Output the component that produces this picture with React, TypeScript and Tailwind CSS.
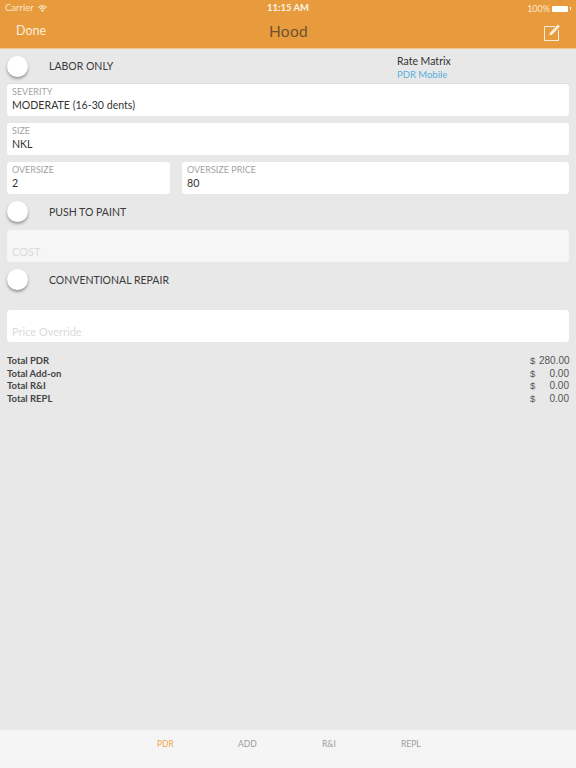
const Toggle = () => (
  <div className="w-[21px] h-[21px] rounded-full bg-white shadow-[0_2px_3px_rgba(0,0,0,0.35)] shrink-0" />
);

const Field = ({ label, value, className = "" }: { label: string; value: string; className?: string }) => (
  <div className={`h-[32px] bg-white rounded-[3px] px-[5px] pt-[2px] ${className}`}>
    <p className="text-[9px] leading-[11px] text-[#a3a3a3]">{label}</p>
    <p className="text-[10.6px] leading-[16px] text-[#333]">{value}</p>
  </div>
);

const Placeholder = ({ label, className = "" }: { label: string; className?: string }) => (
  <div className={`h-[32px] rounded-[3px] px-[5px] flex items-end pb-[3px] ${className}`}>
    <p className="text-[11px] leading-[14px] text-[#dadada]">{label}</p>
  </div>
);

const ToggleRow = ({ label, className = "" }: { label: string; className?: string }) => (
  <div className={`flex items-center ${className}`}>
    <Toggle />
    <span className="ml-[21px] mt-[2px] text-[10.5px] text-[#3a3a3a]">{label}</span>
  </div>
);

const totals = [
  ["Total PDR", "280.00"],
  ["Total Add-on", "0.00"],
  ["Total R&I", "0.00"],
  ["Total REPL", "0.00"],
];

const App = () => {
  return (
    <div className="w-[576px] h-[768px] flex flex-col bg-[#e8e8e8] font-['Lato',sans-serif] overflow-hidden">
      <header className="h-[49px] shrink-0 bg-[#e89b3c] border-b border-[#f0c48c] text-white">
        <div className="h-[17px] px-[5px] flex items-center justify-between text-[9.5px]">
          <div className="flex items-center gap-[4px] w-[100px] text-[#fbe6cc]">
            <span>Carrier</span>
            <svg width="9" height="7" viewBox="0 0 18 14" fill="currentColor">
              <path d="M9 14 6 10.6a4.4 4.4 0 0 1 6 0zM4.6 9 3 7.3a8.6 8.6 0 0 1 12 0L13.4 9a6.4 6.4 0 0 0-8.8 0zM1.7 6 0 4.3a13 13 0 0 1 18 0L16.3 6A10.6 10.6 0 0 0 1.7 6z" />
            </svg>
          </div>
          <span className="font-bold text-[#fdf3e6]">11:15 AM</span>
          <div className="flex items-center justify-end gap-[2px] w-[100px] text-[9px] text-[#fbe6cc]">
            <span>100%</span>
            <div className="w-[16px] h-[6px] bg-white rounded-[1px]" />
            <div className="w-[1px] h-[3px] bg-white" />
          </div>
        </div>
        <div className="h-[29px] pl-[16px] pr-[15px] flex items-center justify-between">
          <span className="w-[80px] text-[12.5px] text-[#fbeedd]">Done</span>
          <span className="text-[15.5px] tracking-[0.3px] text-[#6d5230]">Hood</span>
          <div className="w-[80px] flex justify-end">
            <svg width="18" height="18" viewBox="0 0 18 18" fill="none" stroke="#fbeedd" strokeWidth="1">
              <path d="M12 3.5H1.5v14h14V7" />
              <path d="M6.5 12.5 7 9.8 14.8 1.5l2 1.9L9 11.7z" fill="#fbeedd" stroke="none" />
            </svg>
          </div>
        </div>
      </header>

      <main className="flex-1 px-[7px] pt-[5px]">
        <div className="flex items-center h-[30px] border-b border-[#e0e0e0]">
          <ToggleRow label="LABOR ONLY" className="flex-1 pb-[5px]" />
          <div className="w-[172px] shrink-0 pb-[1px]">
            <p className="text-[10.5px] leading-[13px] text-[#333]">Rate Matrix</p>
            <p className="text-[9.5px] leading-[13px] text-[#5aaede]">PDR Mobile</p>
          </div>
        </div>
        <Field label="SEVERITY" value="MODERATE (16-30 dents)" />
        <Field label="SIZE" value="NKL" className="mt-[7px]" />
        <div className="mt-[7px] flex gap-[12px]">
          <Field label="OVERSIZE" value="2" className="w-[163px]" />
          <Field label="OVERSIZE PRICE" value="80" className="flex-1" />
        </div>
        <ToggleRow label="PUSH TO PAINT" className="mt-[7px] h-[21px]" />
        <Placeholder label="COST" className="mt-[8px] bg-[#f6f6f6]" />
        <ToggleRow label="CONVENTIONAL REPAIR" className="mt-[7px] h-[21px]" />
        <Placeholder label="Price Override" className="mt-[20px] bg-white" />
        <div className="mt-[13px] text-[9.5px] leading-[12.5px]">
          {totals.map(([label, amount]) => (
            <div key={label} className="flex items-center">
              <span className="flex-1 font-bold text-[#444]">{label}</span>
              <span className="font-['Liberation_Sans',sans-serif] text-[#555] w-[9px]">$</span>
              <span className="font-['Liberation_Sans',sans-serif] text-[10px] text-[#555] w-[30px] text-right">{amount}</span>
            </div>
          ))}
        </div>
      </main>

      <nav className="h-[38px] shrink-0 bg-[#f5f5f5] flex items-start pt-[8px] text-[8.5px] text-[#9c9c9c]">
        <span className="ml-[157px] w-[81px] text-[#eda64e]">PDR</span>
        <span className="w-[84px]">ADD</span>
        <span className="w-[79px]">R&amp;I</span>
        <span>REPL</span>
      </nav>
    </div>
  );
};

export default App;
